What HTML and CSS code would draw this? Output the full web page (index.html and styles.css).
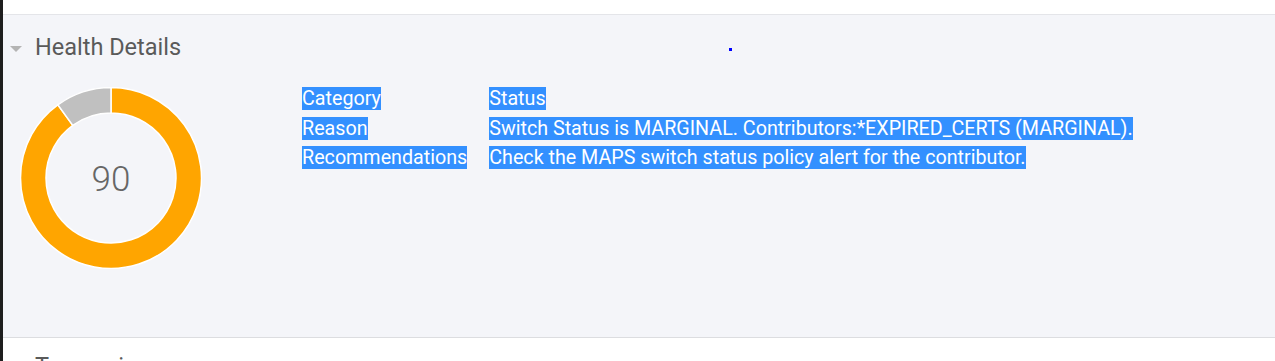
FILE: index.html
```html
<!DOCTYPE html>
<html lang="en">
<head>
  <meta charset="UTF-8" />
  <title>Health Details</title>
  <link rel="stylesheet" href="styles.css">
</head>
<body>
  <div class="frame">
    <div class="topgap"></div>
    <section class="panel">
      <div class="panel-head">
        <span class="caret"></span>
        <h2>Health Details</h2>
        <span class="dot"></span>
      </div>
      <div class="panel-body">
        <svg class="donut" width="182" height="182" viewBox="0 0 182 182">
          <path class="seg-ok" d="M91 0.5 A90.5 90.5 0 1 1 37.81 17.79 L52.79 38.41 A65 65 0 1 0 91 26 Z" />
          <path class="seg-rest" d="M37.81 17.79 A90.5 90.5 0 0 1 91 0.5 L91 26 A65 65 0 0 0 52.79 38.41 Z" />
          <text x="91" y="104" text-anchor="middle">90</text>
        </svg>
        <table class="details">
          <tr><td><span class="sel">Category</span></td><td><span class="sel">Status</span></td></tr>
          <tr><td><span class="sel">Reason</span></td><td><span class="sel">Switch Status is MARGINAL. Contributors:*EXPIRED_CERTS (MARGINAL).</span></td></tr>
          <tr><td><span class="sel">Recommendations</span></td><td><span class="sel">Check the MAPS switch status policy alert for the contributor.</span></td></tr>
        </table>
      </div>
    </section>
    <section class="next">
      <h2>Transceivers</h2>
    </section>
  </div>
</body>
</html>
```

FILE: styles.css
```css
body { margin: 0; background: #fff; font-family: Roboto, "Liberation Sans", sans-serif; overflow: hidden; }
.frame { border-left: 3px solid #1e1e1e; height: 361px; overflow: hidden; }
.topgap { height: 14px; }
.panel { height: 324px; box-sizing: border-box; background: #f4f5f9;
  border-top: 1px solid #e4e5e9; border-bottom: 1px solid #dcdde0;
  padding: 18px 0 0 7px; }
.panel-head { display: flex; align-items: center; height: 28px; }
.caret { width: 0; height: 0; border-left: 6px solid transparent; border-right: 6px solid transparent;
  border-top: 6px solid #b4b4b4; margin: 3px 13px 0 0; }
h2 { margin: 0; font-size: 23.5px; font-weight: 400; line-height: 28px; color: #5a5a5a; }
.dot { width: 3px; height: 3px; background: #0000ff; margin: 4px 0 0 548px; }
.panel-body { display: flex; align-items: flex-start; margin-top: 26px; }
.donut { margin-left: 10px; flex: none; }
.donut path { stroke: #fff; stroke-width: 1.5; }
.seg-ok { fill: #ffa500; }
.seg-rest { fill: #c0c0c0; }
.donut text { font-family: Roboto, sans-serif; font-weight: 300; font-size: 35px; fill: #666; }
.details { margin: -3px 0 0 100px; border-collapse: collapse; font-size: 19.7px; }
.details td { padding: 0; line-height: 29.5px; vertical-align: top; white-space: nowrap; }
.details td:first-child { padding-right: 22px; }
.sel { background: #3390ff; color: #fff; }
.next { padding: 14px 0 0 32px; }
```
